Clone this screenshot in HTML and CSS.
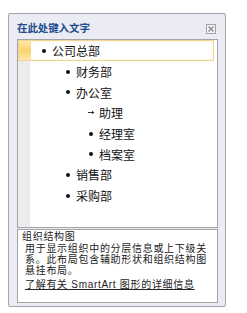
FILE: index.html
```html
<!DOCTYPE html>
<html lang="zh">
<head>
    <meta charset="UTF-8">
    <title>在此处键入文字</title>
    <link rel="stylesheet" href="styles.css">
</head>
<body>
    <div class="pane">
        <div class="pane-head">
            <span class="pane-title">在此处键入文字</span>
            <svg class="close" viewBox="0 0 10 10">
                <rect x="0.5" y="0.5" width="9" height="9" fill="#f4f4f6" stroke="#a0a0a6"/>
                <path d="M2.5 2.5l5 5M7.5 2.5l-5 5" stroke="#8a8a90" stroke-width="1.3"/>
            </svg>
        </div>

        <ul class="tree">
            <li class="row lv1 active"><span class="dot"></span>公司总部</li>
            <li class="row lv2"><span class="dot"></span>财务部</li>
            <li class="row lv2"><span class="dot"></span>办公室</li>
            <li class="row lv3">
                <svg class="arrow" viewBox="0 0 7 5"><path d="M0 2.5h5" stroke="#333" stroke-width="1"/><path d="M4 0.8l2.5 1.7L4 4.2z" fill="#333"/></svg>助理
            </li>
            <li class="row lv3"><span class="dot"></span>经理室</li>
            <li class="row lv3"><span class="dot"></span>档案室</li>
            <li class="row lv2"><span class="dot"></span>销售部</li>
            <li class="row lv2"><span class="dot"></span>采购部</li>
        </ul>

        <div class="desc">
            <div class="desc-title">组织结构图</div>
            <p class="desc-text">用于显示组织中的分层信息或上下级关系。此布局包含辅助形状和组织结构图悬挂布局。</p>
            <a class="desc-link" href="#">了解有关 SmartArt 图形的详细信息</a>
        </div>
    </div>
</body>
</html>
```

FILE: styles.css
```css
* {
    margin: 0;
    padding: 0;
    box-sizing: border-box;
}

body {
    background: #fff;
    font-family: "Noto Sans CJK SC", "Liberation Sans", sans-serif;
    color: #111;
}

/* 外框 */
.pane {
    margin: 13px 0 0 8px;
    width: 218px;
    height: 294px;
    border: 1px solid #a3a3a8;
    border-radius: 2px;
    background: #ebebf3;
    padding: 0 7px 4px 8px;
}

.pane-head {
    height: 25px;
    display: flex;
    align-items: center;
    justify-content: space-between;
    padding: 1px 2px 0 0;
}
.pane-title {
    color: #1d4b8f;
    font-size: 10.5px;
    font-weight: bold;
    letter-spacing: -0.1px;
}
.close {
    width: 10px;
    height: 10px;
    margin-top: 4px;
}

/* 文本窗格 */
.tree {
    list-style: none;
    height: 189px;
    border: 1px solid #a3a3a8;
    background: linear-gradient(to right, #ececec 12px, #fff 12px);
    font-size: 12px;
}
.row {
    height: 20.7px;
    display: flex;
    align-items: center;
    padding-top: 1px;
}
.row.active {
    margin-right: 3px;
    border: 1px solid #f1d48e;
    box-shadow: inset 0 0 2px #fbe9bd;
    background: linear-gradient(to right, transparent 12px, #fff 12px),
                linear-gradient(#fde7a6, #fbd36d 50%, #fde7a6);
}
.lv1 { padding-left: 24px; }
.lv2 { padding-left: 48px; }
.lv3 { padding-left: 71px; }
.row.active.lv1 { padding-left: 23px; }

.dot {
    width: 4px;
    height: 4px;
    border-radius: 50%;
    background: #111;
    margin-right: 6px;
}
.arrow {
    width: 7px;
    height: 5px;
    margin-right: 4px;
    margin-left: -1px;
}

/* 说明 */
.desc {
    margin-top: 1px;
    height: 74px;
    border: 1px solid #a3a3a8;
    background: #fff;
    padding: 0 2px 0 4px;
    font-family: "Liberation Sans", "Noto Sans CJK SC", sans-serif;
    font-size: 10px;
    letter-spacing: 0.7px;
    color: #222;
}
.desc-title {
    line-height: 13px;
}
.desc-text {
    padding: 0 4px 0 3px;
    line-height: 11.2px;
}
.desc-link {
    display: block;
    margin-top: 1px;
    padding-left: 3px;
    line-height: 13px;
    color: #222;
    text-decoration: underline;
}
```
